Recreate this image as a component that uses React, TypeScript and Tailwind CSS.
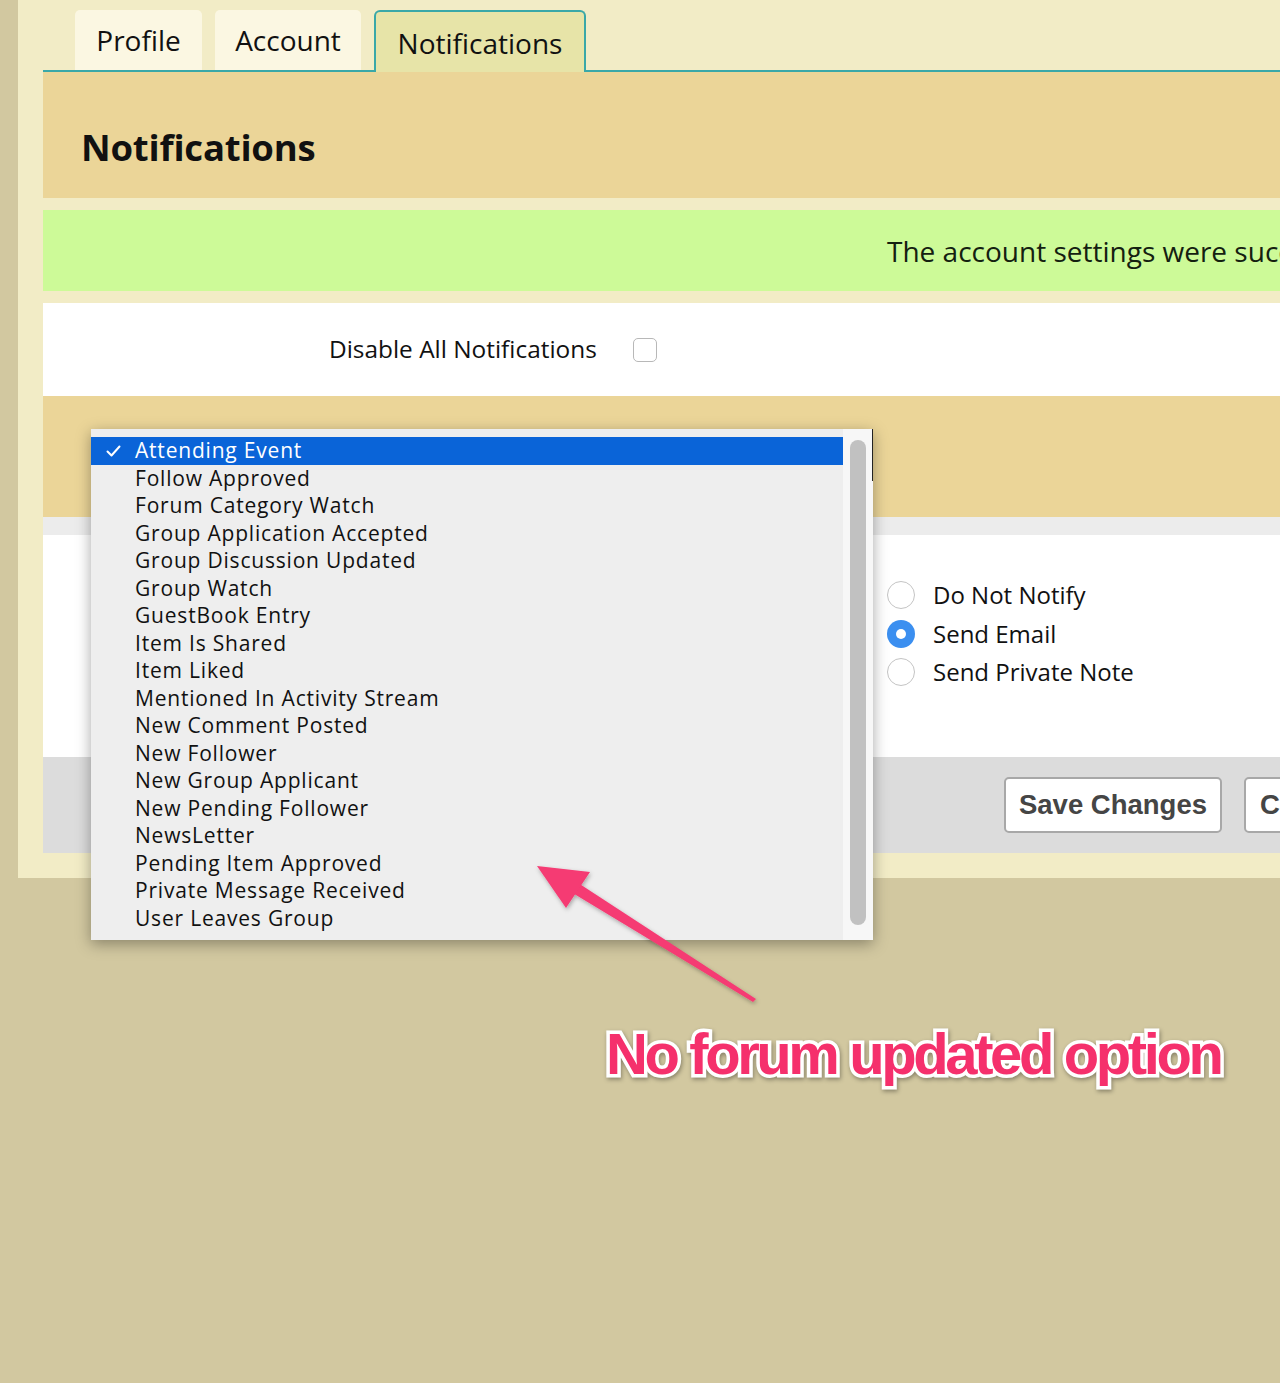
const options = [
  "Attending Event",
  "Follow Approved",
  "Forum Category Watch",
  "Group Application Accepted",
  "Group Discussion Updated",
  "Group Watch",
  "GuestBook Entry",
  "Item Is Shared",
  "Item Liked",
  "Mentioned In Activity Stream",
  "New Comment Posted",
  "New Follower",
  "New Group Applicant",
  "New Pending Follower",
  "NewsLetter",
  "Pending Item Approved",
  "Private Message Received",
  "User Leaves Group",
];

function Radio({ checked, label }: { checked?: boolean; label: string }) {
  return (
    <div className="flex h-[38.5px] items-center gap-[18px]">
      {checked ? (
        <span className="flex h-[28px] w-[28px] items-center justify-center rounded-full bg-[#3b8ff0]">
          <span className="h-[10px] w-[10px] rounded-full bg-white" />
        </span>
      ) : (
        <span className="h-[28px] w-[28px] rounded-full border-[1.5px] border-[#c4c4c4] bg-white" />
      )}
      <span className="text-[24px] text-[#111]">{label}</span>
    </div>
  );
}

export default function App() {
  return (
    <div className="relative h-[1383px] w-[1280px] overflow-hidden bg-[#d2c8a0] font-['Open_Sans',sans-serif] text-[#111]">
      {/* settings panel */}
      <div className="ml-[18px] h-[878px] bg-[#f2ecc6] pl-[25px] pt-[10px]">
        {/* tabs */}
        <div className="relative flex h-[62px] items-start gap-[13px] pl-[32px]">
          <div className="absolute bottom-0 left-0 right-0 h-[2px] bg-[#3aa8a8]" />
          <div className="flex h-[60px] w-[127px] items-center justify-center rounded-t-[5px] bg-[#fbf7e2] text-[28px]">
            Profile
          </div>
          <div className="flex h-[60px] w-[146px] items-center justify-center rounded-t-[5px] bg-[#fbf7e2] text-[28px]">
            Account
          </div>
          <div className="relative z-10 flex h-[62px] w-[212px] items-center justify-center rounded-t-[6px] border-2 border-b-0 border-[#3aa8a8] bg-[#e7e4a8] pt-[2px] text-[28px]">
            Notifications
          </div>
        </div>

        <div className="flex h-[126px] items-center bg-[#ebd598] pl-[38px] pt-[24px]">
          <h1 className="text-[36.5px] font-bold tracking-[-0.2px]">Notifications</h1>
        </div>

        <div className="h-[12px]" />
        <div className="flex h-[81px] items-center overflow-hidden whitespace-nowrap bg-[#cdfa98] pl-[844px] text-[28px] text-[#142010]">
          The account settings were successfully updated.
        </div>
        <div className="h-[12px]" />

        <div className="flex h-[93px] items-center bg-white">
          <span className="ml-[286px] text-[24.4px]">Disable All Notifications</span>
          <span className="ml-[36px] h-[24px] w-[24px] rounded-[5px] border border-[#b8b8b8] bg-white" />
        </div>

        <div className="h-[121px] bg-[#ebd598]" />
        <div className="h-[18px] bg-[#ececec]" />

        <div className="flex h-[222px] flex-col bg-white pl-[844px] pt-[41px]">
          <Radio label="Do Not Notify" />
          <Radio checked label="Send Email" />
          <Radio label="Send Private Note" />
        </div>

        <div className="flex h-[96px] items-center gap-[22px] overflow-hidden bg-[#dcdcdc] pl-[961px] font-['Liberation_Sans',sans-serif]">
          <button className="h-[56px] w-[218px] shrink-0 rounded-[5px] border-2 border-[#a8a8a8] bg-white text-[27.5px] font-bold text-[#454545]">
            Save Changes
          </button>
          <button className="h-[56px] w-[140px] shrink-0 rounded-[5px] border-2 border-[#a8a8a8] bg-white pl-[14px] text-left text-[27.5px] font-bold text-[#454545]">
            Cancel
          </button>
        </div>
      </div>

      {/* open select list */}
      <div className="absolute left-[91px] top-[429px] flex h-[511px] w-[782px] bg-[#eeeeee] shadow-[0_4px_14px_rgba(0,0,0,0.35)]">
        <div className="absolute right-0 top-0 h-[52px] w-px bg-[#222]" />
        <ul className="flex-1 pt-[8px]">
          {options.map((o, i) => (
            <li
              key={o}
              className={
                i === 0
                  ? "flex h-[27.5px] items-center bg-[#0a64d8] text-[21px] tracking-[0.8px] text-white"
                  : "flex h-[27.5px] items-center text-[21px] tracking-[0.8px] text-[#111]"
              }
            >
              <span className="flex w-[44px] justify-start pl-[15px]">
                {i === 0 && (
                  <svg width="15" height="12" viewBox="0 0 15 12" fill="none">
                    <path d="M1.5 6.5 L5.5 10.5 L13.5 1.5" stroke="white" strokeWidth="2" strokeLinecap="round" strokeLinejoin="round" />
                  </svg>
                )}
              </span>
              {o}
            </li>
          ))}
        </ul>
        <div className="flex w-[30px] justify-center bg-[#f7f7f7] pt-[11px]">
          <div className="h-[485px] w-[16px] rounded-full bg-[#c1c1c1]" />
        </div>
      </div>

      {/* annotation arrow */}
      <svg className="absolute left-0 top-0" width="1280" height="1383" viewBox="0 0 1280 1383">
        <defs>
          <filter id="sh" x="-20%" y="-20%" width="140%" height="140%">
            <feDropShadow dx="1" dy="2" stdDeviation="2" floodColor="#000" floodOpacity="0.3" />
          </filter>
        </defs>
        <g filter="url(#sh)" fill="#f53a73">
          <polygon points="756,999 753,1002 566,889 572,879" />
          <polygon points="537,866 590,872 566,908" />
        </g>
      </svg>

      <div className="absolute left-[606px] top-[1018px] whitespace-nowrap font-['Liberation_Sans',sans-serif] text-[58px] font-bold leading-[72px] tracking-[-3.4px] text-[#f5306c] [paint-order:stroke_fill] [-webkit-text-stroke:7px_white] [filter:drop-shadow(1px_2px_2px_rgba(0,0,0,0.35))]">
        No forum updated option
      </div>
    </div>
  );
}
